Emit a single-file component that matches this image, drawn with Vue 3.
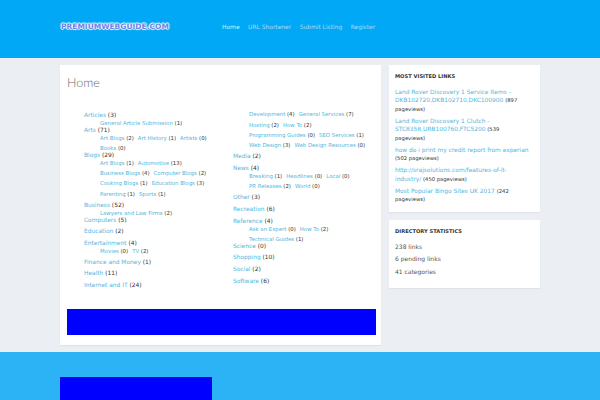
<script setup>
const nav = ['Home', 'URL Shortener', 'Submit Listing', 'Register']
const col1 = [
  { name: 'Articles', n: 3, rows: [[['General Article Submission', 1]]] },
  { name: 'Arts', n: 71, rows: [[['Art Blogs', 2], ['Art History', 1], ['Artists', 0]], [['Books', 0]]] },
  { name: 'Blogs', n: 29, roomy: true, rows: [[['Art Blogs', 1], ['Automotive', 13]], [['Business Blogs', 4], ['Computer Blogs', 2]], [['Cooking Blogs', 1], ['Education Blogs', 3]], [['Parenting', 1], ['Sports', 1]]] },
  { name: 'Business', n: 52, rows: [[['Lawyers and Law Firms', 2]]] },
  { name: 'Computers', n: 5 },
  { name: 'Education', n: 2 },
  { name: 'Entertainment', n: 4, roomy: true, rows: [[['Movies', 0], ['TV', 2]]] },
  { name: 'Finance and Money', n: 1 },
  { name: 'Health', n: 11 },
  { name: 'Internet and IT', n: 24 }
]
const col2Lead = [
  [['Development', 4], ['General Services', 7]],
  [['Hosting', 2], ['How To', 2]],
  [['Programming Guides', 0], ['SEO Services', 1]],
  [['Web Design', 3], ['Web Design Resources', 0]]
]
const col2 = [
  { name: 'Media', n: 2 },
  { name: 'News', n: 4, roomy: true, rows: [[['Breaking', 1], ['Headlines', 0], ['Local', 0]], [['PR Releases', 2], ['World', 0]]] },
  { name: 'Other', n: 3 },
  { name: 'Recreation', n: 6 },
  { name: 'Reference', n: 4, rows: [[['Ask an Expert', 0], ['How To', 2]], [['Technical Guides', 1]]] },
  { name: 'Science', n: 0 },
  { name: 'Shopping', n: 10 },
  { name: 'Social', n: 2 },
  { name: 'Software', n: 6 }
]
const columns = [
  { key: 'a', lead: [], cats: col1 },
  { key: 'b', lead: col2Lead, cats: col2 }
]
const visited = [
  { t: 'Land Rover Discovery 1 Service Items - DKB102720,DKB102710,DKC100900', n: 897 },
  { t: 'Land Rover Discovery 1 Clutch - STC8358,URB100760,FTC5200', n: 539 },
  { t: 'how do i print my credit report from experian', n: 502 },
  { t: 'http://srajsolutions.com/features-of-it-industry/', n: 450 },
  { t: 'Most Popular Bingo Sites UK 2017', n: 242 }
]
const stats = ['238 links', '6 pending links', '41 categories']
</script>

<template>
  <div class="page">
    <header class="top">
      <div class="logo">PREMIUMWEBGUIDE.COM</div>
      <nav class="nav">
        <a v-for="(item, i) in nav" :key="item" :class="{ on: i === 0 }">{{ item }}</a>
      </nav>
    </header>

    <main class="main">
      <section class="card content">
        <h1>Home</h1>
        <div class="dir">
          <div v-for="col in columns" :key="col.key" class="col" :class="'col-' + col.key">
            <div v-if="col.lead.length" class="rows lead">
              <div v-for="(row, r) in col.lead" :key="r" class="row">
                <span v-for="s in row" :key="s[0]"><a>{{ s[0] }}</a> ({{ s[1] }})</span>
              </div>
            </div>
            <div v-for="cat in col.cats" :key="cat.name" class="cat" :class="{ plain: !cat.rows, roomy: cat.roomy }">
              <div class="name"><a>{{ cat.name }}</a> ({{ cat.n }})</div>
              <div v-if="cat.rows" class="rows">
                <div v-for="(row, r) in cat.rows" :key="r" class="row">
                  <span v-for="s in row" :key="s[0]"><a>{{ s[0] }}</a> ({{ s[1] }})</span>
                </div>
              </div>
            </div>
          </div>
        </div>
        <div class="banner"></div>
      </section>

      <aside class="side">
        <section class="card box">
          <h2>MOST VISITED LINKS</h2>
          <p v-for="v in visited" :key="v.n" class="visit"><a>{{ v.t }}</a> <small>({{ v.n }} pageviews)</small></p>
        </section>
        <section class="card box stats">
          <h2>DIRECTORY STATISTICS</h2>
          <p v-for="s in stats" :key="s">{{ s }}</p>
        </section>
      </aside>
    </main>

    <footer class="foot">
      <div class="foot-block"></div>
    </footer>
  </div>
</template>

<style scoped>
.page {
  width: 600px;
  height: 400px;
  overflow: hidden;
  background: #ebeef2;
  font-family: "DejaVu Sans", sans-serif;
  text-rendering: geometricPrecision;
  color: #333;
  display: flex;
  flex-direction: column;
}
a { color: #52b6dc; }
.top {
  height: 58px;
  flex: none;
  background: #00a8f5;
  display: flex;
  padding-left: 61px;
}
.logo {
  width: 161px;
  margin-top: 22px;
  height: 10px;
  font: bold 7.5px/10px "DejaVu Sans", sans-serif;
  color: #6f82e6;
  text-shadow: 0 0 1px #fff, 0 0 1px #fff, 1px 0 1px #dff, -1px 0 1px #dff, 0 1px 1px #dff, 0 -1px 1px #dff;
  white-space: nowrap;
}
.nav {
  display: flex;
  gap: 8.5px;
  margin-top: 23px;
  height: 10px;
  font-size: 5.95px;
  line-height: 10px;
}
.nav a { color: #a4defa; }
.nav a.on { color: #d0effc; }
.main {
  flex: none;
  height: 294px;
  box-sizing: border-box;
  padding: 7px 60px;
  display: flex;
  align-items: flex-start;
  gap: 8px;
}
.card {
  background: #fff;
  box-shadow: 0 1px 1px #dfe2e8;
}
.content {
  width: 321px;
  height: 280px;
  box-sizing: border-box;
  padding: 10px 5px 0 7px;
}
h1 {
  margin: 0;
  font: 300 12.5px/16px Lato, sans-serif;
  color: #6b6b6b;
}
.dir {
  display: flex;
  height: 208px;
}
.col { font-size: 5.9px; }
.col-a { width: 166px; padding: 21.5px 0 0 17px; box-sizing: border-box; }
.col-b { padding-top: 20.3px; }
.cat { margin-bottom: -1px; }
.cat.plain { margin-bottom: 4.6px; }
.cat.roomy { margin-bottom: 3px; }
.name { line-height: 7px; white-space: nowrap; }
.rows {
  margin-left: 16px;
  display: flex;
  flex-direction: column;
  gap: 1.3px;
}
.lead { margin-bottom: 3.3px; }
.row {
  height: 9px;
  line-height: 9px;
  font-size: 5.4px;
  display: flex;
  gap: 4px;
  white-space: nowrap;
}
.banner {
  width: 309px;
  height: 26px;
  margin-top: 10px;
  background: #00f;
}
.side {
  width: 151px;
  display: flex;
  flex-direction: column;
  gap: 8px;
}
.box {
  box-sizing: border-box;
  padding: 7.5px 9px 4px 6px;
}
h2 {
  margin: 0 0 8px;
  font: bold 5.15px/8px "DejaVu Sans", sans-serif;
  color: #333;
}
.visit {
  margin: 0 0 3.5px;
  font-size: 5.9px;
  line-height: 8.5px;
}
.visit small { font-size: 5.25px; color: #333; }
.stats { padding-bottom: 6px; }
.stats p {
  margin: 0 0 4.2px;
  font-size: 6px;
  line-height: 8.5px;
  color: #555;
}
.foot {
  flex: 1;
  background: #2bb3f5;
  padding: 25px 0 0 60px;
}
.foot-block {
  width: 152px;
  height: 60px;
  background: #00f;
}
</style>
